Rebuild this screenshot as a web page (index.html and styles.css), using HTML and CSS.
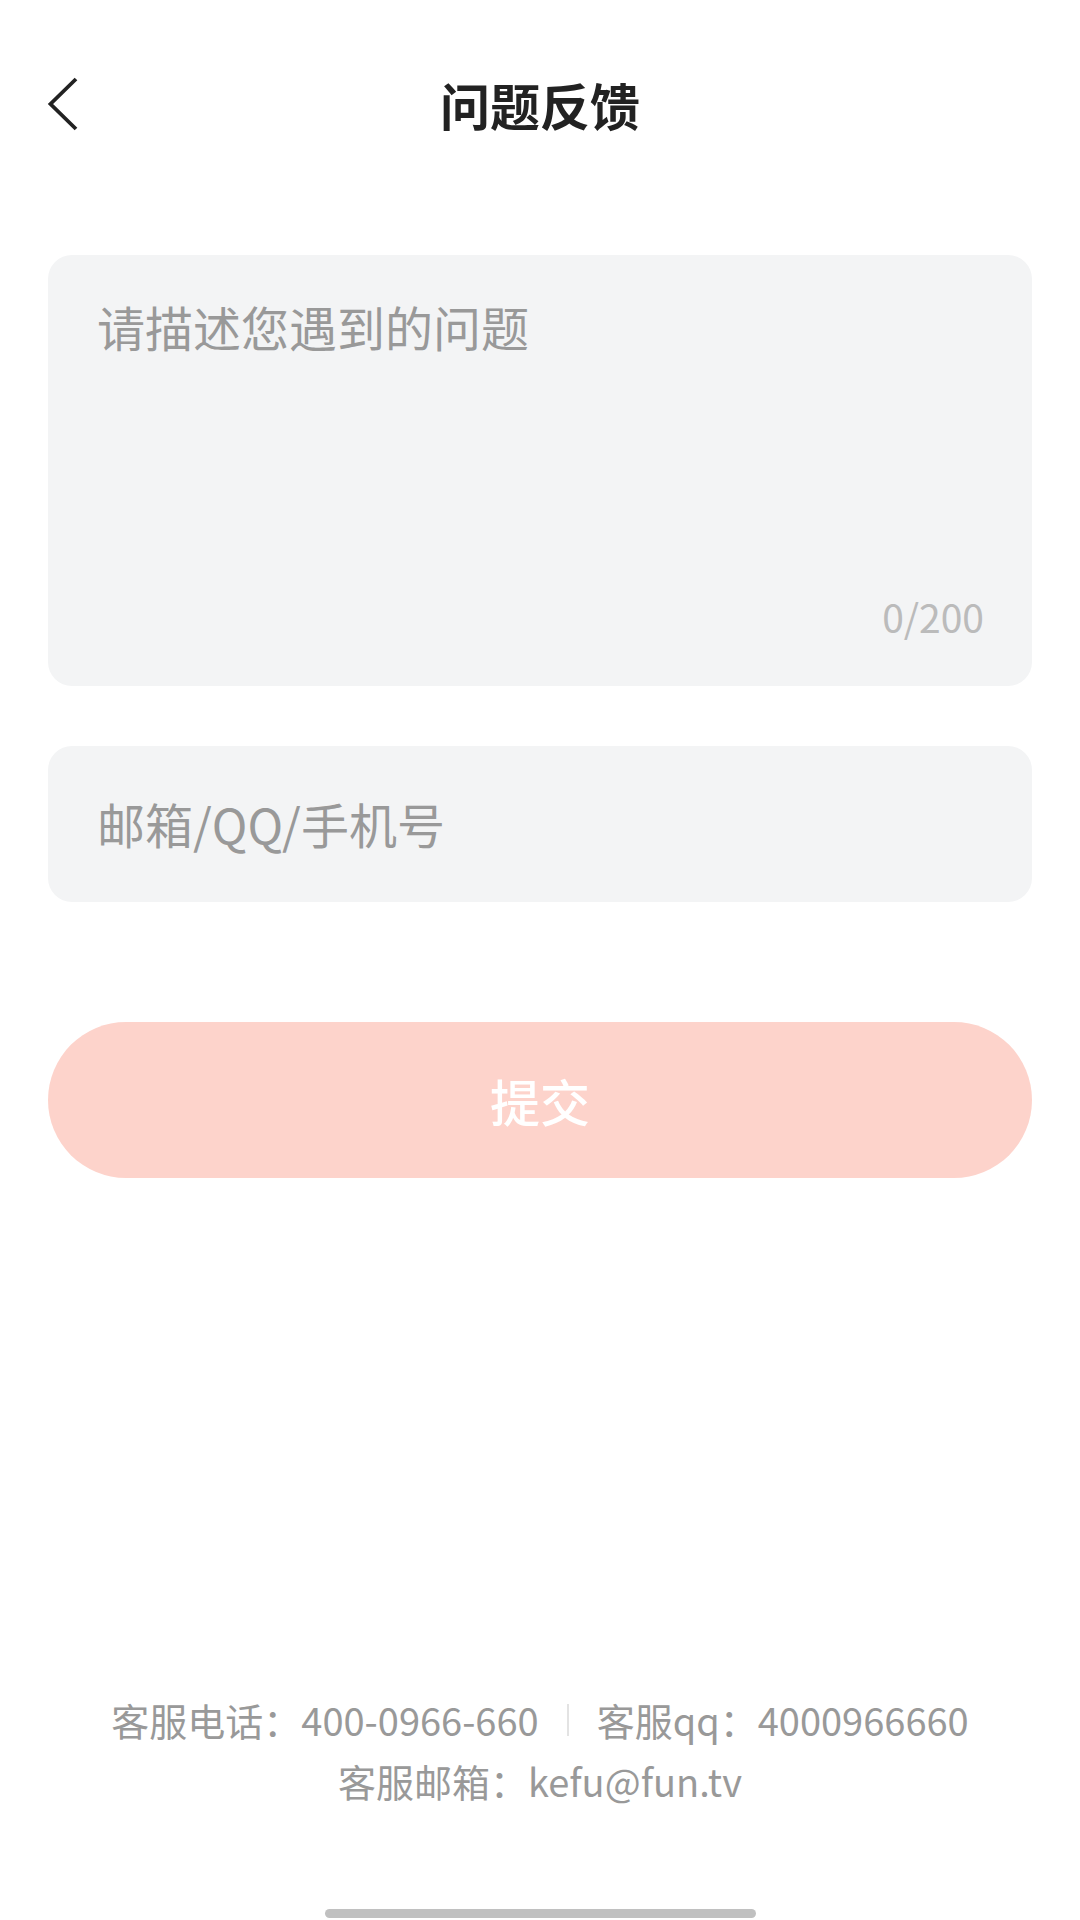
FILE: index.html
```html
<!DOCTYPE html>
<html lang="zh-CN">
<head>
<meta charset="utf-8">
<title>问题反馈</title>
<link rel="stylesheet" href="styles.css">
</head>
<body>
<div class="page">
  <header class="nav">
    <div class="nav-left">
      <svg class="back" width="40" height="60" viewBox="0 0 40 60" aria-hidden="true">
        <path d="M32 5 L6.5 30 L32 55" fill="none" stroke="#222" stroke-width="3.8" stroke-linecap="butt" stroke-linejoin="miter"/>
      </svg>
    </div>
    <h1 class="title">问题反馈</h1>
    <div class="nav-right"></div>
  </header>

  <main class="form">
    <div class="textarea-box">
      <div class="placeholder">请描述您遇到的问题</div>
      <div class="counter">0/200</div>
    </div>
    <div class="input-box">
      <div class="placeholder">邮箱/QQ/手机号</div>
    </div>
    <div class="submit">提交</div>
  </main>

  <footer class="footer">
    <div class="footer-line">客服电话：400-0966-660<span class="sep"></span>客服qq：4000966660</div>
    <div class="footer-line">客服邮箱：kefu@fun.tv</div>
  </footer>
  <div class="home-bar"></div>
</div>
</body>
</html>
```

FILE: styles.css
```css
* { box-sizing: border-box; }

html, body {
  margin: 0;
  padding: 0;
  background: #ffffff;
}

body {
  font-family: "Noto Sans CJK SC", "Noto Sans", sans-serif;
  color: #222222;
}

.page {
  width: 1080px;
  height: 1920px;
  display: flex;
  flex-direction: column;
}

.nav {
  height: 208px;
  display: grid;
  grid-template-columns: 1fr auto 1fr;
  align-items: center;
}

.nav-left {
  padding-left: 44px;
  display: flex;
  align-items: center;
}

.back { display: block; }

.title {
  margin: 0;
  font-size: 50px;
  font-weight: 700;
  line-height: 1.45;
  color: #222222;
}

.form {
  padding: 47px 48px 0;
  display: flex;
  flex-direction: column;
}

.textarea-box {
  height: 431px;
  background: #f3f4f5;
  border-radius: 24px;
  padding: 37px 48px 41px 49px;
  display: flex;
  flex-direction: column;
  justify-content: space-between;
}

.placeholder {
  font-size: 48px;
  line-height: 1.45;
  color: #999999;
}

.counter {
  align-self: flex-end;
  font-size: 39px;
  line-height: 1.45;
  color: #bbbbbb;
}

.input-box {
  margin-top: 60px;
  height: 156px;
  background: #f3f4f5;
  border-radius: 24px;
  padding-left: 49px;
  display: flex;
  align-items: center;
}

.submit {
  margin-top: 120px;
  height: 156px;
  border-radius: 78px;
  background: #fdd3cb;
  color: #ffffff;
  font-size: 50px;
  font-weight: 500;
  display: flex;
  align-items: center;
  justify-content: center;
}

.footer {
  margin-top: auto;
  display: flex;
  flex-direction: column;
  align-items: center;
}

.footer-line {
  font-size: 38px;
  line-height: 61px;
  color: #999999;
  display: flex;
  align-items: center;
}

.sep {
  display: inline-block;
  width: 2px;
  height: 32px;
  background: #e3e3e3;
  margin: 0 28px;
}

.home-bar {
  align-self: center;
  margin-top: 98px;
  margin-bottom: 2px;
  width: 431px;
  height: 9px;
  border-radius: 5px;
  background: #c0c0c0;
}
```
